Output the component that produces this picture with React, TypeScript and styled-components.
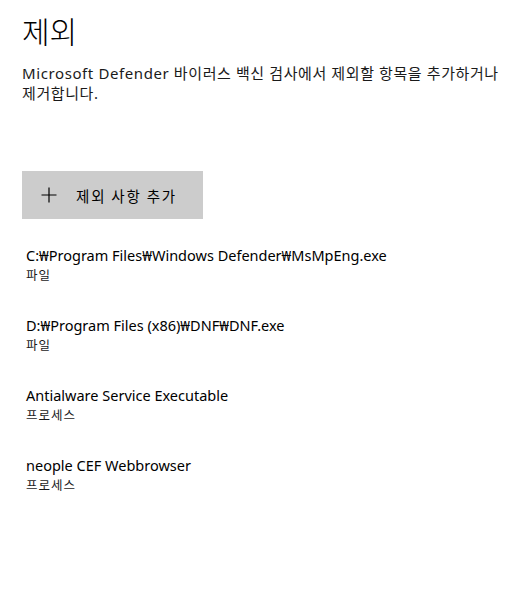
import React from 'react';
import styled, { createGlobalStyle } from 'styled-components';

const GlobalStyle = createGlobalStyle`
  html, body {
    margin: 0;
    padding: 0;
    background: #ffffff;
  }
  body {
    font-family: "Noto Sans", "Noto Sans CJK KR", sans-serif;
    color: #000000;
  }
`;

const Page = styled.div`
  width: 524px;
  height: 602px;
  box-sizing: border-box;
  padding: 9px 22px 0 22px;
  background: #ffffff;
`;

const Title = styled.h1`
  margin: 0;
  font-family: "Noto Sans CJK KR", sans-serif;
  font-weight: 300;
  font-size: 30px;
  line-height: 42px;
`;

const Description = styled.p`
  margin: 12px 0 0 0;
  font-size: 15px;
  line-height: 20px;
  letter-spacing: 0.6px;
  color: #1a1a1a;
  word-break: keep-all;
`;

const AddButton = styled.button`
  margin-top: 68px;
  width: 181px;
  height: 48px;
  border: none;
  background: #cccccc;
  display: flex;
  align-items: center;
  padding: 0 0 0 19px;
  gap: 19px;
  font-family: "Noto Sans CJK KR", sans-serif;
  font-size: 14.5px;
  letter-spacing: 1.8px;
  color: #000000;
  cursor: pointer;
`;

const List = styled.div`
  margin-top: 26px;
  padding-left: 4px;
  display: flex;
  flex-direction: column;
  gap: 30px;
`;

const Item = styled.div`
  display: flex;
  flex-direction: column;
`;

const ItemName = styled.div`
  font-size: 14.5px;
  line-height: 20px;
  color: #000000;
`;

const ItemKind = styled.div`
  font-family: "Noto Sans CJK KR", sans-serif;
  font-size: 12.5px;
  line-height: 20px;
  letter-spacing: 1px;
  color: #1a1a1a;
`;

const items = [
  { name: 'C:₩Program Files₩Windows Defender₩MsMpEng.exe', kind: '파일' },
  { name: 'D:₩Program Files (x86)₩DNF₩DNF.exe', kind: '파일' },
  { name: 'Antialware Service Executable', kind: '프로세스' },
  { name: 'neople CEF Webbrowser', kind: '프로세스' },
];

function PlusIcon() {
  return (
    <svg width="16" height="16" viewBox="0 0 16 16">
      <path d="M8 0.5V15.5M0.5 8H15.5" stroke="#000" strokeWidth="1.2" fill="none" />
    </svg>
  );
}

export default function App() {
  return (
    <>
      <GlobalStyle />
      <Page>
        <Title>제외</Title>
        <Description>
          Microsoft Defender 바이러스 백신 검사에서 제외할 항목을 추가하거나 제거합니다.
        </Description>
        <AddButton>
          <PlusIcon />
          제외 사항 추가
        </AddButton>
        <List>
          {items.map((item) => (
            <Item key={item.name}>
              <ItemName>{item.name}</ItemName>
              <ItemKind>{item.kind}</ItemKind>
            </Item>
          ))}
        </List>
      </Page>
    </>
  );
}
